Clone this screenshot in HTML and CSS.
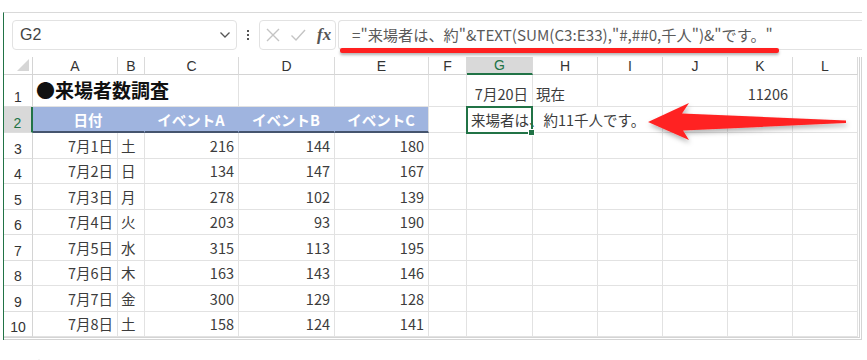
FILE: index.html
```html
<!DOCTYPE html>
<html lang="ja">
<head>
<meta charset="utf-8">
<link rel="stylesheet" href="styles.css">
</head>
<body>
<div class="app">
  <div class="toolbar">
    <div class="namebox"><span>G2</span>
      <svg class="chev" width="12" height="8" viewBox="0 0 12 8"><path d="M1.5 1.5 L6 6 L10.5 1.5" fill="none" stroke="#555" stroke-width="1.3"/></svg>
    </div>
    <div class="dots"><i></i><i></i><i></i></div>
    <div class="fxbox">
      <svg width="16" height="16" viewBox="0 0 16 16"><path d="M2 2 L14 14 M14 2 L2 14" stroke="#c4c4c4" stroke-width="1.4" fill="none"/></svg>
      <svg width="16" height="16" viewBox="0 0 16 16"><path d="M1.5 8.5 L6 13 L15 3" stroke="#c4c4c4" stroke-width="1.4" fill="none"/></svg>
      <span class="fx">fx</span>
    </div>
    <div class="formula">="来場者は、約"&amp;TEXT(SUM(C3:E33),"#,##0,千人")&amp;"です。"</div>
  </div>
  <div class="sheet">
    <div class="corner"><svg width="12" height="12" viewBox="0 0 12 12"><path d="M12 0 L12 12 L0 12 Z" fill="#d6d6d6"/></svg></div>
    <div class="ch">A</div><div class="ch">B</div><div class="ch">C</div><div class="ch">D</div><div class="ch">E</div><div class="ch">F</div><div class="ch sel">G</div><div class="ch">H</div><div class="ch">I</div><div class="ch">J</div><div class="ch">K</div><div class="ch">L</div>

    <div class="rh">1</div>
    <div class="c title span3">●来場者数調査</div>
    <div class="c"></div><div class="c"></div><div class="c"></div>
    <div class="c r">7月20日</div><div class="c">現在</div><div class="c"></div><div class="c"></div><div class="c r">11206</div><div class="c"></div>

    <div class="rh sel">2</div>
    <div class="c band span2">日付</div>
    <div class="c band">イベントA</div>
    <div class="c band">イベントB</div>
    <div class="c band last">イベントC</div>
    <div class="c"></div>
    <div class="c span3 g2">来場者は、約11千人です。<span class="selbox"><span class="handle"></span></span></div>
    <div class="c"></div><div class="c"></div><div class="c"></div>

    <div class="rh">3</div><div class="c r">7月1日</div><div class="c">土</div><div class="c r">216</div><div class="c r">144</div><div class="c r">180</div><div class="c"></div><div class="c"></div><div class="c"></div><div class="c"></div><div class="c"></div><div class="c"></div><div class="c"></div>
    <div class="rh">4</div><div class="c r">7月2日</div><div class="c">日</div><div class="c r">134</div><div class="c r">147</div><div class="c r">167</div><div class="c"></div><div class="c"></div><div class="c"></div><div class="c"></div><div class="c"></div><div class="c"></div><div class="c"></div>
    <div class="rh">5</div><div class="c r">7月3日</div><div class="c">月</div><div class="c r">278</div><div class="c r">102</div><div class="c r">139</div><div class="c"></div><div class="c"></div><div class="c"></div><div class="c"></div><div class="c"></div><div class="c"></div><div class="c"></div>
    <div class="rh">6</div><div class="c r">7月4日</div><div class="c">火</div><div class="c r">203</div><div class="c r">93</div><div class="c r">190</div><div class="c"></div><div class="c"></div><div class="c"></div><div class="c"></div><div class="c"></div><div class="c"></div><div class="c"></div>
    <div class="rh">7</div><div class="c r">7月5日</div><div class="c">水</div><div class="c r">315</div><div class="c r">113</div><div class="c r">195</div><div class="c"></div><div class="c"></div><div class="c"></div><div class="c"></div><div class="c"></div><div class="c"></div><div class="c"></div>
    <div class="rh">8</div><div class="c r">7月6日</div><div class="c">木</div><div class="c r">163</div><div class="c r">143</div><div class="c r">146</div><div class="c"></div><div class="c"></div><div class="c"></div><div class="c"></div><div class="c"></div><div class="c"></div><div class="c"></div>
    <div class="rh">9</div><div class="c r">7月7日</div><div class="c">金</div><div class="c r">300</div><div class="c r">129</div><div class="c r">128</div><div class="c"></div><div class="c"></div><div class="c"></div><div class="c"></div><div class="c"></div><div class="c"></div><div class="c"></div>
    <div class="rh">10</div><div class="c r">7月8日</div><div class="c">土</div><div class="c r">158</div><div class="c r">124</div><div class="c r">141</div><div class="c"></div><div class="c"></div><div class="c"></div><div class="c"></div><div class="c"></div><div class="c"></div><div class="c"></div>
  </div>
</div>
<div class="footer"><svg width="14" height="10" viewBox="0 0 14 10"><path d="M7 0 L14 7 L14 10 L0 10 L0 7 Z" fill="#ececec"/></svg></div>

<div class="redline"></div>
<svg class="arrow" width="867" height="360" viewBox="0 0 867 360">
  <defs>
    <filter id="sh" x="-10%" y="-30%" width="120%" height="160%">
      <feDropShadow dx="1" dy="3" stdDeviation="2.5" flood-color="#000" flood-opacity="0.3"/>
    </filter>
  </defs>
  <polygon points="648,122 689,103 682,113.5 846,120.5 846,123 683,130.5 689,140" fill="#ff2222" filter="url(#sh)"/>
</svg>
</body>
</html>
```
FILE: styles.css
```css
* { box-sizing: border-box; margin: 0; padding: 0; }
body {
  margin: 0;
  width: 867px;
  height: 360px;
  overflow: hidden;
  position: relative;
  background: #fff;
  font-family: "Noto Sans CJK JP", sans-serif;
}
.app {
  margin: 12px 0 0 3px;
  width: 859px;
  border-top: 1px solid #d9d9d9;
  border-left: 1px solid #217346;
}
.toolbar {
  height: 44px;
  display: flex;
  align-items: flex-start;
  padding: 7px 0 0 8px;
}
.namebox {
  width: 225px;
  height: 30px;
  border: 1px solid #e2e2e2;
  border-radius: 4px;
  display: flex;
  align-items: center;
  justify-content: space-between;
  padding: 0 5px 0 7px;
  font-family: "Liberation Sans", sans-serif;
  font-size: 16px;
  color: #444;
}
.dots {
  width: 22px;
  height: 30px;
  display: flex;
  flex-direction: column;
  align-items: center;
  justify-content: center;
  gap: 2px;
}
.dots i {
  display: block;
  width: 2px;
  height: 2px;
  background: #555;
}
.fxbox {
  width: 77px;
  height: 30px;
  border: 1px solid #e2e2e2;
  border-radius: 4px;
  display: flex;
  align-items: center;
  gap: 9px;
  padding-left: 5px;
}
.fx {
  font-family: "Liberation Serif", serif;
  font-style: italic;
  font-weight: bold;
  font-size: 17px;
  color: #555;
  margin-left: 2px;
}
.formula {
  margin-left: 2px;
  flex: 1;
  height: 30px;
  border: 1px solid #e2e2e2;
  border-right: none;
  border-radius: 4px 0 0 4px;
  padding-left: 13px;
  font-size: 15.2px;
  line-height: 27px;
  color: #5a5a5a;
  white-space: nowrap;
}
.sheet {
  display: grid;
  grid-template-columns: 29px 85px 27px 94px 96px 94px 38px 66px 65px 65px 65px 65px 65px;
  grid-template-rows: 18px 32px 26px 26px 25px 26px 25px 26px 25px 26px 25px;
  width: 858px;
  border-right: 3px double #d4d4d4;
  border-bottom: 3px double #d4d4d4;
}
.corner {
  border-right: 1px solid #d4d4d4;
  border-bottom: 1px solid #d4d4d4;
  display: flex;
  align-items: flex-end;
  justify-content: flex-end;
  padding: 0 3px 3px 0;
}
.ch {
  border-right: 1px solid #dadada;
  border-bottom: 1px solid #d4d4d4;
  display: flex;
  align-items: center;
  justify-content: center;
  font-family: "Liberation Sans", sans-serif;
  font-size: 14px;
  color: #333;
}
.ch.sel {
  background: #d9d9d9;
  color: #217346;
  border-bottom: 2px solid #217346;
}
.rh {
  border-right: 1px solid #d4d4d4;
  border-bottom: 1px solid #dedede;
  display: flex;
  align-items: flex-end;
  justify-content: center;
  padding-bottom: 1px;
  font-family: "Liberation Sans", sans-serif;
  font-size: 14px;
  color: #333;
}
.rh.sel {
  background: #d9d9d9;
  color: #217346;
  border-right: 2px solid #217346;
}
.c {
  border-right: 1px solid #e2e2e2;
  border-bottom: 1px solid #e2e2e2;
  display: flex;
  align-items: flex-end;
  padding: 0 4px 2px 3px;
  font-size: 14.5px;
  line-height: 20px;
  color: #3c3c3c;
  white-space: nowrap;
}
.r { justify-content: flex-end; }
.span2 { grid-column: span 2; }
.span3 { grid-column: span 3; }
.title {
  font-size: 19px;
  font-weight: 700;
  color: #111;
  line-height: 26px;
  padding: 0 0 3px 3px;
}
.band {
  background: #9fb4df;
  color: #fff;
  font-weight: 700;
  justify-content: center;
  border-right-color: #9fb4df;
  border-bottom: 2px solid #45546e;
  padding-bottom: 1px;
}
.band.last { border-right-color: #e2e2e2; }
.g2 {
  position: relative;
  padding-left: 4px;
}
.selbox {
  position: absolute;
  left: -1px;
  top: -1px;
  width: 67px;
  height: 28px;
  border: 2px solid #217346;
}
.handle {
  position: absolute;
  right: -4px;
  bottom: -4px;
  width: 7px;
  height: 7px;
  background: #217346;
  border: 1px solid #fff;
}
.footer {
  padding: 10px 0 0 32px;
  height: 20px;
}
.redline {
  position: absolute;
  left: 340px;
  top: 48px;
  width: 439px;
  height: 5px;
  background: #ff2020;
  border-radius: 2px;
  box-shadow: 0 2px 3px rgba(0, 0, 0, 0.3);
}
.arrow {
  position: absolute;
  left: 0;
  top: 0;
  pointer-events: none;
}
```
